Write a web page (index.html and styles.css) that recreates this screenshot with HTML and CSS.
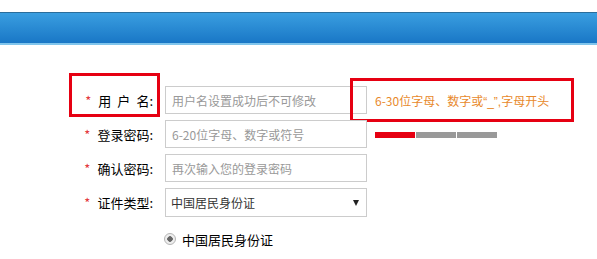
FILE: index.html
```html
<!DOCTYPE html>
<html lang="zh-CN">

<head>
    <meta charset="UTF-8">
    <meta name="viewport" content="width=device-width, initial-scale=1.0">
    <title>注册</title>
    <link rel="stylesheet" href="styles.css">
</head>

<body>
    <div class="header"></div>
    <div class="form">
        <div class="row">
            <label class="label"><span class="star">*</span><span class="spaced">用户</span>名:</label>
            <input class="field" type="text" placeholder="用户名设置成功后不可修改">
            <span class="hint">6-30位字母、数字或<span class="latin">“_”,</span>字母开头</span>
            <div class="mark mark-label"></div>
            <div class="mark mark-hint"></div>
        </div>
        <div class="row">
            <label class="label"><span class="star">*</span>登录密码:</label>
            <input class="field" type="password" placeholder="6-20位字母、数字或符号">
            <div class="strength">
                <span class="bar bar-on"></span>
                <span class="bar"></span>
                <span class="bar"></span>
            </div>
        </div>
        <div class="row">
            <label class="label"><span class="star">*</span>确认密码:</label>
            <input class="field" type="password" placeholder="再次输入您的登录密码">
        </div>
        <div class="row row-select">
            <label class="label"><span class="star">*</span>证件类型:</label>
            <div class="field select">
                <span>中国居民身份证</span>
                <span class="arrow"></span>
            </div>
        </div>
        <div class="row row-radio">
            <span class="radio"></span>
            <span class="radio-text">中国居民身份证</span>
        </div>
    </div>
</body>

</html>
```

FILE: styles.css
```css
:root {
    --field-width: 202px;
    --red: #e60012;
    --hint: #e8892b;
}

body {
    margin: 0;
    background-color: #fff;
    font-family: "Microsoft YaHei", "Noto Sans CJK SC", sans-serif;
    font-size: 12px;
    color: #333;
}

.header {
    margin-top: 12px;
    height: 30px;
    border-top: 1px solid #2a6d9b;
    border-bottom: 2px solid #80c5ec;
    background: linear-gradient(#3a9ee0, #1977c6);
}

.form {
    padding-top: 41px;
    padding-left: 80px;
}

.row {
    position: relative;
    display: flex;
    align-items: center;
    height: 28px;
    margin-bottom: 6px;
}

.row-select {
    margin-top: 2px;
    height: 29px;
}

.label {
    width: 73px;
    margin-right: 12px;
    text-align: right;
    font-size: 13px;
    color: #000;
    white-space: nowrap;
}

.star {
    color: #e4393c;
    margin-right: 7px;
}

.spaced {
    letter-spacing: 6px;
}

.field {
    box-sizing: border-box;
    width: var(--field-width);
    height: 100%;
    border: 1px solid #ccc;
    padding: 0 6px;
    font-family: inherit;
    font-size: 12px;
    color: #333;
    outline: none;
}

.field::placeholder {
    color: #999;
}

.hint {
    margin-left: 8px;
    color: var(--hint);
    font-size: 12px;
}

.latin {
    font-family: "Liberation Sans", sans-serif;
}

.strength {
    align-self: flex-start;
    display: flex;
    gap: 1px;
    margin-left: 8px;
    margin-top: 12px;
}

.bar {
    width: 40px;
    height: 6px;
    background-color: #999;
}

.bar-on {
    background-color: var(--red);
}

.select {
    display: flex;
    align-items: center;
    justify-content: space-between;
    padding-left: 5px;
    padding-right: 7px;
}

.arrow {
    width: 0;
    height: 0;
    border-left: 3px solid transparent;
    border-right: 3px solid transparent;
    border-top: 6px solid #222;
}

.row-radio {
    margin-top: 14px;
    height: 16px;
    padding-left: 84px;
}

.radio {
    box-sizing: border-box;
    width: 12px;
    height: 12px;
    border: 1px solid #b5b5b5;
    border-radius: 50%;
    background: radial-gradient(circle, #666 0 2.5px, #eee 3px);
    margin-right: 6px;
}

.radio-text {
    font-size: 13px;
    color: #000;
}

.mark {
    position: absolute;
    box-sizing: border-box;
    border: 3px solid var(--red);
    height: 44px;
}

.mark-label {
    left: -11px;
    top: -13px;
    width: 91px;
}

.mark-hint {
    left: 270px;
    top: -8px;
    width: 224px;
}
```
